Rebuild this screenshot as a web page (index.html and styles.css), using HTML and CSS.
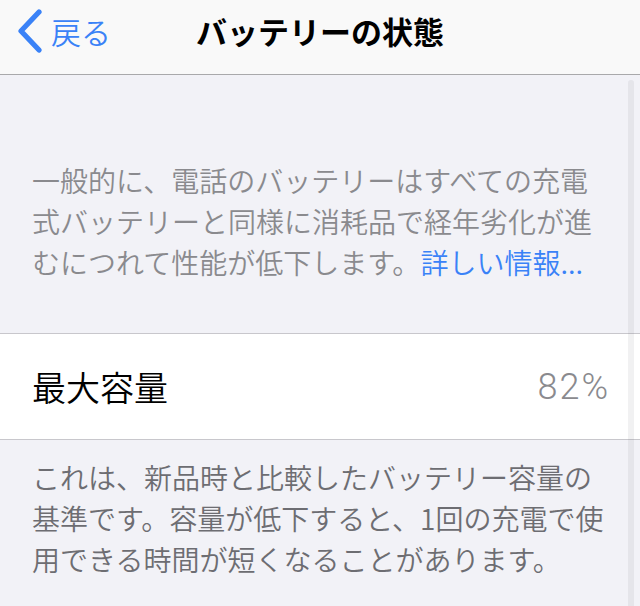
FILE: index.html
```html
<!DOCTYPE html>
<html lang="ja">
<head>
<meta charset="utf-8">
<title>バッテリーの状態</title>
<link rel="stylesheet" href="styles.css">
</head>
<body>
<div class="screen">
  <header class="nav">
    <a class="back" href="#">
      <svg class="chev" width="28" height="44" viewBox="0 0 28 44" aria-hidden="true">
        <path d="M23 3 L5 22 L23 41" fill="none" stroke="#3a82f7" stroke-width="5.2" stroke-linecap="round" stroke-linejoin="round"/>
      </svg>
      <span class="back-label">戻る</span>
    </a>
    <h1 class="title">バッテリーの状態</h1>
    <div class="nav-spacer"></div>
  </header>

  <section class="intro">
    <p class="intro-text">一般的に、電話のバッテリーはすべての充電式バッテリーと同様に消耗品で経年劣化が進むにつれて性能が低下します。<a class="link" href="#">詳しい情報...</a></p>
  </section>

  <div class="cell">
    <span class="cell-label">最大容量</span>
    <span class="cell-value">82%</span>
  </div>

  <section class="footer">
    <p class="footer-text">これは、新品時と比較したバッテリー容量の基準です。容量が低下すると、1回の充電で使用できる時間が短くなることがあります。</p>
  </section>

  <div class="scroll-indicator"></div>
</div>
</body>
</html>
```

FILE: styles.css
```css
* {
  box-sizing: border-box;
}

html, body {
  margin: 0;
  padding: 0;
}

body {
  font-family: "Noto Sans CJK JP", "Noto Sans", sans-serif;
  background: #f2f2f7;
}

.screen {
  position: relative;
  width: 640px;
  height: 606px;
  overflow: hidden;
  background: #f2f2f7;
}

.nav {
  height: 75px;
  background: #f9f9f9;
  border-bottom: 1px solid #a9a9ab;
  display: grid;
  grid-template-columns: 1fr auto 1fr;
  align-items: center;
  padding-bottom: 13px;
}

.back {
  display: flex;
  align-items: center;
  gap: 7px;
  padding-left: 16px;
  text-decoration: none;
  color: #3a82f7;
}

.chev {
  display: block;
}

.back-label {
  font-size: 30px;
  font-weight: 350;
  line-height: 40px;
  color: #3a82f7;
}

.title {
  margin: 0;
  font-size: 31px;
  font-weight: 700;
  line-height: 40px;
  color: #000;
  letter-spacing: 0;
}

.intro {
  padding: 85px 32px 50px 32px;
}

.intro-text {
  margin: 0;
  font-size: 28px;
  font-weight: 350;
  line-height: 41px;
  color: #8a8a8e;
}

.link {
  color: #3a82f7;
  text-decoration: none;
}

.cell {
  height: 107px;
  background: #fff;
  border-top: 1px solid #c8c7cc;
  border-bottom: 1px solid #c8c7cc;
  display: flex;
  align-items: center;
  justify-content: space-between;
  padding: 0 30px 0 32px;
}

.cell-label {
  font-size: 34px;
  font-weight: 350;
  color: #000;
  line-height: 44px;
}

.cell-value {
  font-size: 36px;
  font-weight: 300;
  color: #8a8a8e;
  line-height: 44px;
  letter-spacing: 2px;
  font-family: Roboto, "Noto Sans", sans-serif;
}

.footer {
  padding: 17px 32px 0 32px;
}

.footer-text {
  margin: 0;
  font-size: 28px;
  font-weight: 350;
  line-height: 41px;
  color: #6d6d72;
}

.scroll-indicator {
  position: absolute;
  left: 628px;
  top: 80px;
  width: 6px;
  height: 560px;
  border-radius: 3px;
  background: rgba(120, 120, 128, 0.1);
}
```
